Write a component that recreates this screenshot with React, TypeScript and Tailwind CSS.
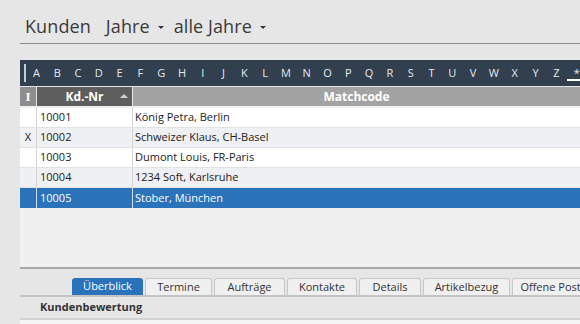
import React from 'react';

const letters = 'ABCDEFGHIJKLMNOPQRSTUVWXYZ'.split('');

const rows = [
  { mark: '', nr: '10001', name: 'König Petra, Berlin' },
  { mark: 'X', nr: '10002', name: 'Schweizer Klaus, CH-Basel' },
  { mark: '', nr: '10003', name: 'Dumont Louis, FR-Paris' },
  { mark: '', nr: '10004', name: '1234 Soft, Karlsruhe' },
  { mark: '', nr: '10005', name: 'Stober, München' },
];

const tabs = [
  { label: 'Überblick', w: 'w-[71px]' },
  { label: 'Termine', w: 'w-[67px]' },
  { label: 'Aufträge', w: 'w-[71px]' },
  { label: 'Kontakte', w: 'w-[70px]' },
  { label: 'Details', w: 'w-[62px]' },
  { label: 'Artikelbezug', w: 'w-[87px]' },
  { label: 'Offene Posten', w: 'w-[90px]' },
];

function Caret() {
  return <span className="ml-[8px] mt-[2px] inline-block border-x-[3px] border-t-[3px] border-x-transparent border-t-[#333]" />;
}

export default function App() {
  return (
    <div className="w-[580px] h-[324px] overflow-hidden bg-[#e6e6e6] font-['Open_Sans','Noto_Sans',sans-serif] text-[#222]">
      {/* Title */}
      <div className="ml-5 h-[44px] border-b border-[#8a8a8a] flex items-center pt-[10px] pl-[5px] text-[18px] text-[#3a3a3a] tracking-[0.1px]">
        <span>Kunden</span>
        <span className="ml-[15px]">Jahre</span>
        <Caret />
        <span className="ml-[10px]">alle Jahre</span>
        <Caret />
      </div>

      <div className="ml-5 mt-[16px]">
        {/* Alphabet bar */}
        <div className="h-[26px] bg-[#323f4f] flex items-center text-[11px] text-[#e4e9ef]">
          <span className="ml-[4px] w-[3px] h-[18px] border border-[#c8ced6]" />
          {letters.map((l) => (
            <span key={l} className="w-[20.8px] shrink-0 text-center">{l}</span>
          ))}
          <span className="w-[20px] shrink-0 text-center relative top-[1px] border-b-2 border-white leading-[12px]">*</span>
        </div>

        {/* Table */}
        <div className="mt-px bg-[#f0f0f0] border-b-2 border-[#a8a8a8]">
          <div className="h-[19px] flex text-[12px] font-bold text-white">
            <div className="w-[16px] bg-[#8d8d8d] flex items-center justify-center font-['Liberation_Serif',serif] text-[13px]">I</div>
            <div className="w-px bg-[#e6e6e6]" />
            <div className="w-[95px] bg-[#5e5e5e] flex items-center justify-center relative">
              <span>Kd.-Nr</span>
              <span className="absolute right-[4px] top-[7px] border-x-[4px] border-b-[4px] border-x-transparent border-b-[#d0d0d0]" />
            </div>
            <div className="w-px bg-[#e6e6e6]" />
            <div className="flex-1 bg-[#a3a3a3] flex items-center justify-center">Matchcode</div>
          </div>
          <div className="h-[2px]" />
          {rows.map((r, i) => {
            const sel = i === 4;
            const bg = sel ? 'bg-[#2a73ba] text-white' : i % 2 === 0 ? 'bg-white' : 'bg-[#eff0f3]';
            return (
              <div key={r.nr} className={`h-[20px] flex text-[11px] items-stretch ${bg} ${i < 4 ? 'border-b border-[#e2e2e2]' : ''}`}>
                <div className="w-[16px] flex items-center justify-center">{r.mark}</div>
                <div className={`w-px ${sel ? 'bg-[#cfe0f0]' : 'bg-[#d4d4d4]'}`} />
                <div className="w-[95px] flex items-center pl-[3px]">{r.nr}</div>
                <div className={`w-px ${sel ? 'bg-[#cfe0f0]' : 'bg-[#d4d4d4]'}`} />
                <div className="flex-1 flex items-center pl-[2px]">{r.name}</div>
              </div>
            );
          })}
          <div className="h-[59px] bg-[#f0f0f0]" />
        </div>

        {/* Tabs */}
        <div className="mt-[9px] h-[19px] flex items-end pl-[52px] border-b-2 border-[#c4c4c4] text-[11px] whitespace-nowrap">
          {tabs.map((t, i) => (
            <div
              key={t.label}
              className={`${t.w} shrink-0 h-[17px] mr-[2px] flex items-center justify-center rounded-t-[3px] overflow-hidden ${
                i === 0 ? 'bg-[#2a73ba] text-white' : 'bg-[#f0f0f0] border border-b-0 border-[#c8c8c8] text-[#333]'
              }`}
            >
              {t.label}
            </div>
          ))}
        </div>

        {/* Section */}
        <div className="h-[23px] flex items-center pl-[20px] text-[11px] font-bold text-[#333] border-b-2 border-[#d2d2d2]">
          Kundenbewertung
        </div>
        <div className="h-[20px] bg-[#f5f5f5]" />
      </div>
    </div>
  );
}
